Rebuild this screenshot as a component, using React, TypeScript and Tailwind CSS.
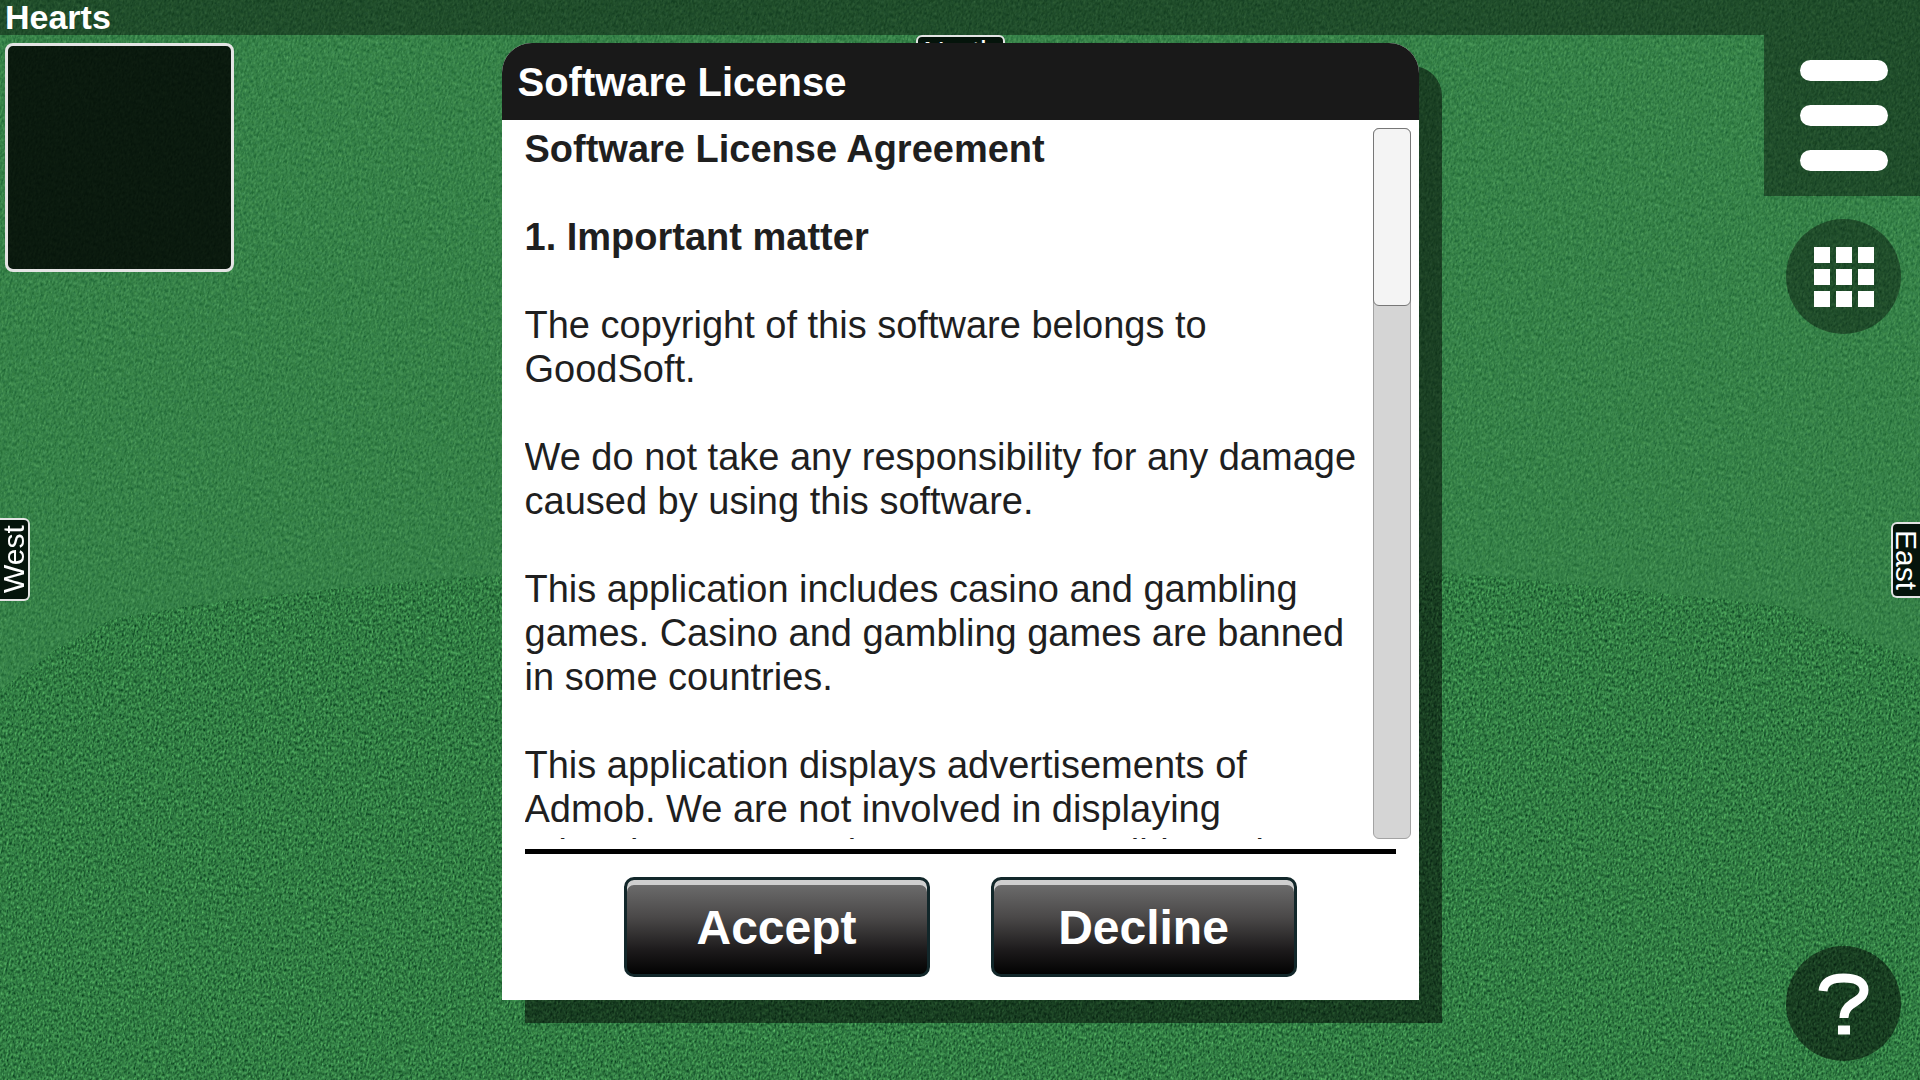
import React, { useRef, useState } from 'react';

const bars = [0, 1, 2];
const tiles = [0, 1, 2, 3, 4, 5, 6, 7, 8];

function Felt() {
  return (
    <svg className="absolute inset-0 h-full w-full" viewBox="0 0 1920 1080" preserveAspectRatio="none" aria-hidden="true">
      <defs>
        <filter id="felt-far" x="0" y="0" width="100%" height="100%" colorInterpolationFilters="sRGB">
          <feTurbulence type="fractalNoise" baseFrequency="0.55 0.28" numOctaves="3" seed="4" />
          <feColorMatrix values="0.3 0 0 0 0.06  0.35 0 0 0 0.33  0.25 0.05 0 0 0.13  0 0 0 0 1" />
        </filter>
        <filter id="felt-near" x="0" y="0" width="100%" height="100%" colorInterpolationFilters="sRGB">
          <feTurbulence type="fractalNoise" baseFrequency="0.55 0.33" numOctaves="2" seed="9" />
          <feColorMatrix values="0.5 0 0 0 -0.06  0.75 0 0 0 0.11  0.45 0.05 0 0 0.01  0 0 0 0 1" />
        </filter>
        <clipPath id="fold">
          <path d="M0 690 L55 650 L110 620 Q250 592 500 575 Q960 540 1440 572 Q1640 590 1780 606 Q1850 635 1920 660 V1080 H0 Z" />
        </clipPath>
      </defs>
      <g transform="rotate(16 960 540)">
        <rect x="-300" y="-400" width="2520" height="1880" filter="url(#felt-far)" />
      </g>
      <g clipPath="url(#fold)">
        <g transform="rotate(12 960 540)">
          <rect x="-300" y="-400" width="2520" height="1880" filter="url(#felt-near)" />
        </g>
      </g>
    </svg>
  );
}

function HelpIcon() {
  return (
    <svg className="h-16 w-[52px]" viewBox="0 0 52 64" fill="none" stroke="white" aria-hidden="true">
      <path d="M5 19 C6 9 14 6 26 6 C38 6 46 10 46 18 C46 31 26 29 26 46" strokeWidth="9" />
      <path d="M20 58 h12" strokeWidth="9" />
    </svg>
  );
}

function GlossButton({ label, onClick }: { label: string; onClick: () => void }) {
  return (
    <button
      onClick={onClick}
      className="h-[100px] w-[306px] rounded-[10px] border-[3px] border-[#12272a] bg-[linear-gradient(#707070,#4a4848_40%,#1c1a1b_75%,#020202)] pt-[2px] text-5xl font-bold text-white shadow-[inset_0_5px_0_#cfcfcf]"
    >
      {label}
    </button>
  );
}

function License() {
  const textRef = useRef<HTMLDivElement>(null);
  const [progress, setProgress] = useState(0);

  const handleScroll = () => {
    const el = textRef.current;
    if (!el) return;
    setProgress(el.scrollTop / Math.max(1, el.scrollHeight - el.clientHeight));
  };

  return (
    <div className="flex min-h-0 flex-1 pr-2 pl-[23px]">
      <div
        ref={textRef}
        id="license-text"
        tabIndex={0}
        onScroll={handleScroll}
        className="min-w-0 flex-1 overflow-x-hidden overflow-y-auto pt-[7px] text-[38px] leading-[44px] whitespace-nowrap text-[#1f1f1f] outline-none [scrollbar-width:none]"
      >
        <h2 className="mb-11 font-bold">Software License Agreement</h2>
        <h3 className="mb-11 font-bold">1. Important matter</h3>
        <p className="mb-11">The copyright of this software belongs to<br />GoodSoft.</p>
        <p className="mb-11">We do not take any responsibility for any damage<br />caused by using this software.</p>
        <p className="mb-11">
          This application includes casino and gambling<br />games. Casino and gambling games are banned<br />in some countries.
        </p>
        <p>
          This application displays advertisements of<br />Admob. We are not involved in displaying<br />advertisements and are not responsible and
        </p>
      </div>
      <div
        role="scrollbar"
        aria-controls="license-text"
        aria-valuenow={Math.round(progress * 100)}
        className="mt-2 w-[38px] rounded-md border border-[#a3a3a3] bg-[#d5d5d5]"
      >
        <div className="-m-px h-[178px] rounded-md border border-[#777777] bg-[#f4f4f4]" />
      </div>
    </div>
  );
}

function App() {
  const [open, setOpen] = useState(true);

  return (
    <div className="relative flex h-screen flex-col overflow-hidden bg-[#35834a] font-['Liberation_Sans',Arial,sans-serif]">
      <Felt />

      {/* Title bar */}
      <header className="relative h-[35px] bg-black/40 pl-[5px]">
        <h1 className="text-[34px] leading-[34px] font-bold text-white">Hearts</h1>
      </header>

      {/* Table */}
      <main className="relative flex flex-1 items-start justify-between">
        <div className="mt-2 ml-[5px] size-[229px] rounded-lg border-[3px] border-[#e4e4e4] bg-black/80" />

        <div className="flex flex-col items-end self-stretch">
          <button aria-label="Menu" className="flex h-[161px] w-[156px] flex-col items-center gap-6 bg-black/40 pt-[25px] pl-1">
            {bars.map((b) => (
              <span key={b} className="h-[21px] w-[88px] rounded-full bg-white" />
            ))}
          </button>
          <button aria-label="Games" className="mt-[23px] mr-[19px] grid size-[115px] place-content-center rounded-full bg-black/40">
            <span className="grid grid-cols-3 gap-[6px]">
              {tiles.map((t) => (
                <span key={t} className="size-4 bg-white" />
              ))}
            </span>
          </button>
          <button aria-label="Help" className="mt-auto mr-[19px] mb-[19px] grid size-[115px] place-content-center rounded-full bg-black/50">
            <HelpIcon />
          </button>
        </div>

        {/* Seats */}
        <div className="absolute inset-x-0 top-0 flex justify-center">
          <span className="w-[89px] rounded-md border-2 border-[#e4e4e4] bg-[#05140b] text-center text-[30px] leading-[30px] text-white">North</span>
        </div>
        <div className="absolute top-[483px] left-0 flex h-[83px] w-[30px] rotate-180 items-center justify-center rounded-l-md border-2 border-r-0 border-[#e4e4e4] bg-[#05140b]">
          <span className="text-[30px] leading-[28px] text-white [writing-mode:vertical-rl]">West</span>
        </div>
        <div className="absolute top-[487px] right-0 flex h-[76px] w-[29px] items-center justify-center rounded-l-md border-2 border-r-0 border-[#e4e4e4] bg-[#05140b]">
          <span className="text-[30px] leading-[27px] text-white [writing-mode:vertical-rl]">East</span>
        </div>
      </main>

      {/* License dialog */}
      {open && (
        <div className="absolute inset-0 flex justify-center pt-[43px] pb-20">
          <section
            role="dialog"
            aria-labelledby="license-title"
            className="flex w-[917px] max-w-full flex-col rounded-t-[30px] bg-white shadow-[23px_23px_0_rgba(0,0,0,0.5)]"
          >
            <h2 id="license-title" className="h-[77px] rounded-t-[30px] bg-[#191919] px-4 text-[40px] leading-[79px] font-bold text-white">
              Software License
            </h2>
            <License />
            <hr className="mx-[23px] mt-[10px] border-t-[5px] border-black" />
            <div className="flex justify-center gap-[61px] py-[23px]">
              <GlossButton label="Accept" onClick={() => setOpen(false)} />
              <GlossButton label="Decline" onClick={() => setOpen(false)} />
            </div>
          </section>
        </div>
      )}
    </div>
  );
}

export default App;
